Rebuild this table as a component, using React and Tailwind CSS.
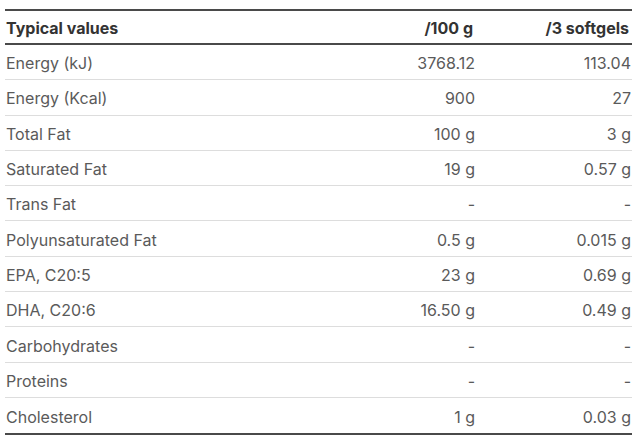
const rows = [
  ["Energy (kJ)", "3768.12", "113.04"],
  ["Energy (Kcal)", "900", "27"],
  ["Total Fat", "100 g", "3 g"],
  ["Saturated Fat", "19 g", "0.57 g"],
  ["Trans Fat", "-", "-"],
  ["Polyunsaturated Fat", "0.5 g", "0.015 g"],
  ["EPA, C20:5", "23 g", "0.69 g"],
  ["DHA, C20:6", "16.50 g", "0.49 g"],
  ["Carbohydrates", "-", "-"],
  ["Proteins", "-", "-"],
  ["Cholesterol", "1 g", "0.03 g"],
];

export default function App() {
  return (
    <div className="w-[640px] h-[440px] bg-white pt-[9px] pl-[5px] pr-[8px] font-['Inter',sans-serif] text-[16px]">
      <div className="border-t-2 border-b-2 border-[#4a4a4a]">
        <div className="grid grid-cols-[1fr_150px_156px] h-[34px] pt-[2px] items-center border-b-2 border-[#4a4a4a] font-bold text-[#333] pl-[1px] pr-[3px]">
          <span>Typical values</span>
          <span className="text-right">/100 g</span>
          <span className="text-right">/3 softgels</span>
        </div>
        {rows.map((r, i) => (
          <div
            key={r[0]}
            className={
              "grid grid-cols-[1fr_150px_156px] h-[35.3px] pt-[2px] items-center text-[#5a5a5a] pl-[1px] pr-[1px] " +
              (i < rows.length - 1 ? "border-b border-[#dddddd]" : "")
            }
          >
            <span>{r[0]}</span>
            <span className="text-right">{r[1]}</span>
            <span className="text-right">{r[2]}</span>
          </div>
        ))}
      </div>
    </div>
  );
}
